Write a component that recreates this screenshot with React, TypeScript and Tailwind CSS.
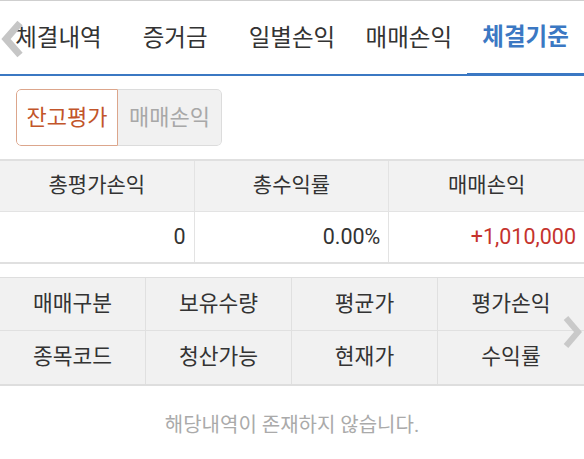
const tabs = ["체결내역", "증거금", "일별손익", "매매손익", "체결기준"];

const summary = [
    { label: "총평가손익", value: "0", red: false },
    { label: "총수익률", value: "0.00%", red: false },
    { label: "매매손익", value: "+1,010,000", red: true },
];

const cols = ["매매구분", "보유수량", "평균가", "평가손익", "종목코드", "청산가능", "현재가", "수익률"];

export default function App() {
    return (
        <div className="w-[584px] h-[459px] bg-white overflow-hidden font-['Roboto','Noto_Sans_CJK_KR',sans-serif] text-[#333]">
            {/* tab bar */}
            <div className="relative border-t border-[#cfcfcf]">
                <div className="flex h-[75px] border-b-2 border-[#3b78c3]">
                    {tabs.map((t, i) => (
                        <div
                            key={t}
                            className={
                                i === 4
                                    ? "flex-1 flex items-center justify-center text-[23.5px] font-bold text-[#3b78c3] border-b-[3px] border-[#3b78c3] -mb-[2px] pb-[1px] pt-[2px]"
                                    : "flex-1 flex items-center justify-center text-[23.5px] text-[#333] pt-[2px]"
                            }
                        >
                            {t}
                        </div>
                    ))}
                </div>
                <svg className="absolute left-0 top-[18px]" width="24" height="40" viewBox="0 0 24 40">
                    <path d="M20 4 L6 20 L20 36" fill="none" stroke="#c6c6c6" strokeWidth="7" />
                </svg>
            </div>

            {/* segment */}
            <div className="h-[83px] px-4 pt-[13px]">
                <div className="flex w-[206px] h-[57px] rounded-[5px] overflow-hidden">
                    <div className="w-[102px] flex items-center justify-center border border-[#dca68c] rounded-l-[5px] text-[22px] text-[#c2552a] bg-white">
                        잔고평가
                    </div>
                    <div className="flex-1 flex items-center justify-center border border-l-0 border-[#dcdcdc] rounded-r-[5px] text-[22px] text-[#a8a8a8] bg-[#f1f1f1]">
                        매매손익
                    </div>
                </div>
            </div>

            {/* summary table */}
            <div className="grid grid-cols-3 border-t-2 border-b-2 border-[#e0e0e0]">
                {summary.map((s, i) => (
                    <div key={s.label} className={i < 2 ? "border-r border-[#e3e3e3]" : ""}>
                        <div className="h-[51px] flex items-center justify-center bg-[#f2f2f2] border-b border-[#e3e3e3] text-[21px] text-[#333]">
                            {s.label}
                        </div>
                        <div
                            className={
                                s.red
                                    ? "h-[50px] flex items-center justify-end pr-2 text-[21.5px] text-[#c5332d]"
                                    : "h-[50px] flex items-center justify-end pr-2 text-[21.5px] text-[#333]"
                            }
                        >
                            {s.value}
                        </div>
                    </div>
                ))}
            </div>

            {/* column header grid */}
            <div className="relative mt-[13px]">
                <div className="grid grid-cols-4 bg-[#f1f1f1] border-t border-b-2 border-[#dedede]">
                    {cols.map((c, i) => (
                        <div
                            key={c}
                            className={
                                "h-[53px] flex items-center justify-center text-[21.5px] text-[#333] border-[#e0e0e0] " +
                                (i % 4 < 3 ? "border-r " : "") +
                                (i < 4 ? "border-b" : "")
                            }
                        >
                            {c}
                        </div>
                    ))}
                </div>
                <svg className="absolute right-0 top-[37px]" width="22" height="36" viewBox="0 0 22 36">
                    <path d="M4 4 L16 18 L4 32" fill="none" stroke="#c9c9c9" strokeWidth="6" />
                </svg>
            </div>

            <div className="h-[78px] flex items-center justify-center text-[20px] text-[#aaaaaa]">
                해당내역이 존재하지 않습니다.
            </div>
        </div>
    );
}
